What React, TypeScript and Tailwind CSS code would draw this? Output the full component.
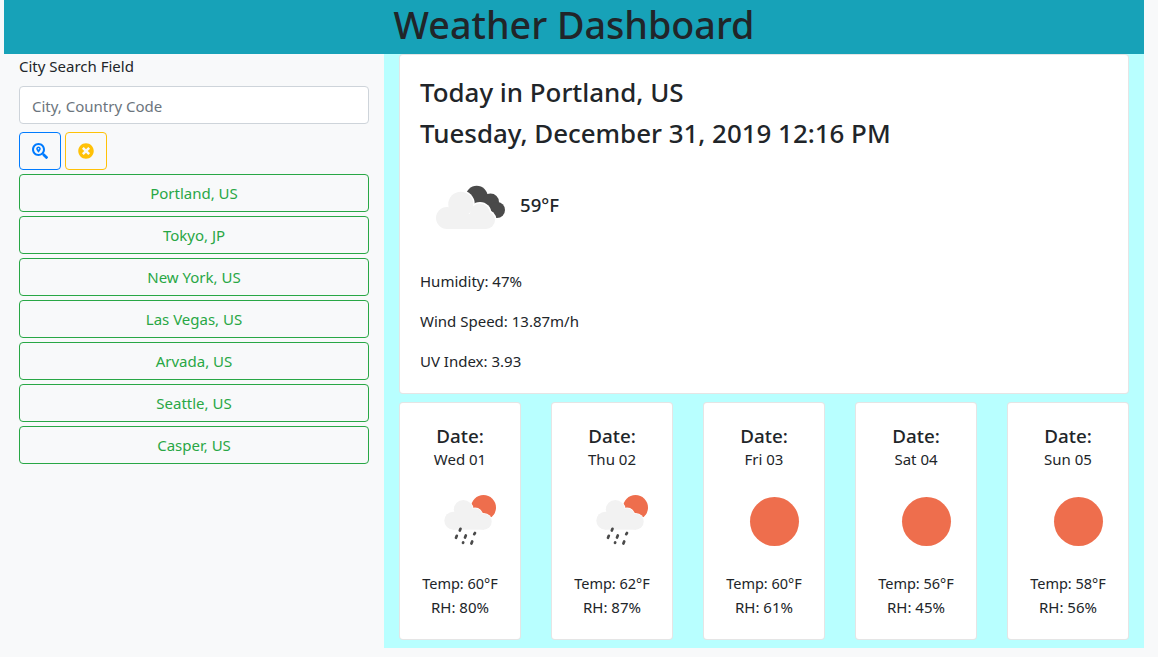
import { FaSearchLocation, FaTimesCircle } from "react-icons/fa";

const cities = ["Portland, US", "Tokyo, JP", "New York, US", "Las Vegas, US", "Arvada, US", "Seattle, US", "Casper, US"];

const forecast = [
  { day: "Wed 01", temp: "60", rh: "80", rain: true },
  { day: "Thu 02", temp: "62", rh: "87", rain: true },
  { day: "Fri 03", temp: "60", rh: "61", rain: false },
  { day: "Sat 04", temp: "56", rh: "45", rain: false },
  { day: "Sun 05", temp: "58", rh: "56", rain: false },
];

function CloudyIcon() {
  const bumps = [
    [27, 60, 11],
    [40.8, 46.2, 12.5],
    [60, 55.5, 10],
    [66, 62, 9],
  ];
  return (
    <svg viewBox="0 0 100 95" className="w-[100px] h-[95px] shrink-0">
      <g fill="#4a4a4a">
        <circle cx="56.7" cy="38.7" r="11" />
        <circle cx="70.5" cy="44" r="8.5" />
        <circle cx="77" cy="52" r="8" />
      </g>
      <g fill="#ffffff">
        {bumps.map((b) => (
          <circle key={b[0]} cx={b[0]} cy={b[1]} r={b[2] + 1.5} />
        ))}
      </g>
      <g fill="#f2f2f2">
        {bumps.map((b) => (
          <circle key={b[0]} cx={b[0]} cy={b[1]} r={b[2]} />
        ))}
        <rect x="27" y="56" width="39" height="15" />
      </g>
    </svg>
  );
}

function RainIcon() {
  const bumps = [
    [43.3, 49.7, 9],
    [53.3, 38.5, 9.5],
    [65, 44.7, 7.5],
    [73.7, 50.7, 8],
  ];
  const drops = [
    [50.5, 57.8, 49.8, 59.5],
    [65, 62, 64.2, 63.2],
    [46.8, 64.8, 46, 66.8],
    [55.8, 64.5, 55, 66.5],
    [53.2, 71.4, 53, 71.8],
    [62.2, 70.5, 61.4, 72.5],
  ];
  return (
    <svg viewBox="0 0 100 100" className="w-[100px] h-[100px]">
      <circle cx="73.5" cy="36.5" r="12.5" fill="#ee6e4d" />
      <g fill="#ffffff">
        {bumps.map((b) => (
          <circle key={b[0]} cx={b[0]} cy={b[1]} r={b[2] + 0.7} />
        ))}
      </g>
      <g fill="#f2f2f2">
        {bumps.map((b) => (
          <circle key={b[0]} cx={b[0]} cy={b[1]} r={b[2]} />
        ))}
        <rect x="43" y="46" width="31" height="12.7" />
      </g>
      <g stroke="#4a4a4a" strokeWidth="2.7" strokeLinecap="round">
        {drops.map((d) => (
          <line key={d[0]} x1={d[0]} y1={d[1]} x2={d[2]} y2={d[3]} />
        ))}
      </g>
    </svg>
  );
}

function SunIcon() {
  return (
    <svg viewBox="0 0 100 100" className="w-[100px] h-[100px]">
      <circle cx="60.5" cy="50.5" r="24.5" fill="#ee6e4d" />
    </svg>
  );
}

export default function App() {
  return (
    <div className="min-h-screen bg-[#f8f9fa] text-[#212529] text-[15px] font-['Noto_Sans',sans-serif]">
      <div className="w-[1140px] ml-1">
        <header className="h-[54px] pb-1 bg-[#17a2b8] flex items-center justify-center">
          <h1 className="text-[37.7px] leading-[48px] font-medium">Weather Dashboard</h1>
        </header>
        <div className="flex">
          <aside className="w-[380px] px-[15px]">
            <label className="block leading-6 mb-2">City Search Field</label>
            <input
              placeholder="City, Country Code"
              className="block w-full h-[38px] px-3 pt-px bg-white border border-[#ced4da] rounded placeholder:text-[#6c757d]"
            />
            <div className="flex gap-1 mt-2">
              <button className="w-[42px] h-[38px] flex items-center justify-center border border-[#007bff] rounded text-[#007bff]">
                <FaSearchLocation size={16} />
              </button>
              <button className="w-[42px] h-[38px] flex items-center justify-center border border-[#ffc107] rounded text-[#ffc107]">
                <FaTimesCircle size={16} />
              </button>
            </div>
            <div className="flex flex-col gap-1 mt-1">
              {cities.map((city) => (
                <button key={city} className="h-[38px] border border-[#28a745] rounded text-[#28a745]">
                  {city}
                </button>
              ))}
            </div>
          </aside>
          <main className="w-[760px] h-[594px] bg-[#b8ffff] px-[15px]">
            <section className="h-[340px] bg-white border border-black/10 rounded p-5">
              <h3 className="text-[25.9px] leading-[33.6px] font-medium mt-px mb-[7px]">Today in Portland, US</h3>
              <h3 className="text-[25.9px] leading-[33.6px] font-medium mb-2">Tuesday, December 31, 2019 12:16 PM</h3>
              <div className="flex items-center h-[95px] mb-4">
                <CloudyIcon />
                <span className="text-[18.6px] font-medium pb-0.5">59°F</span>
              </div>
              <p className="leading-6 mb-4">Humidity: 47%</p>
              <p className="leading-6 mb-4">Wind Speed: 13.87m/h</p>
              <p className="leading-6">UV Index: 3.93</p>
            </section>
            <div className="flex justify-between mt-2">
              {forecast.map((f) => (
                <div key={f.day} className="w-[122px] h-[238px] bg-white border border-black/10 rounded py-5 flex flex-col items-center text-center">
                  <h5 className="text-[18.8px] leading-6 font-medium pt-px -mb-px">Date:</h5>
                  <p className="leading-6">{f.day}</p>
                  {f.rain ? <RainIcon /> : <SunIcon />}
                  <p className="text-[14.5px] leading-6">Temp: {f.temp}°F</p>
                  <p className="leading-6">RH: {f.rh}%</p>
                </div>
              ))}
            </div>
          </main>
        </div>
      </div>
    </div>
  );
}
